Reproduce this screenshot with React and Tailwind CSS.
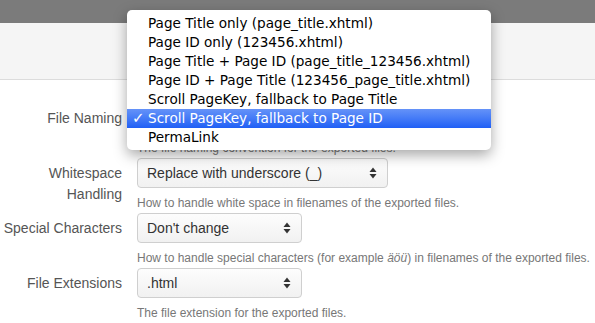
import React from 'react';

const menuItems = [
  'Page Title only (page_title.xhtml)',
  'Page ID only (123456.xhtml)',
  'Page Title + Page ID (page_title_123456.xhtml)',
  'Page ID + Page Title (123456_page_title.xhtml)',
  'Scroll PageKey, fallback to Page Title',
  'Scroll PageKey, fallback to Page ID',
  'PermaLink',
];

const selectedIndex = 5;

function Arrows() {
  return (
    <svg width="8" height="12" viewBox="0 0 8 12" className="shrink-0">
      <path d="M4 0.5 L7.5 5 L0.5 5 Z" fill="#333" />
      <path d="M4 11.5 L7.5 7 L0.5 7 Z" fill="#333" />
    </svg>
  );
}

function FakeSelect({ value, width }) {
  return (
    <div
      className={`flex h-[30px] items-center justify-between rounded-[4px] border border-[#cfcfcf] bg-gradient-to-b from-[#fdfdfd] to-[#f1f1f1] pl-[9px] pr-[10px] text-[14px] text-[#333] ${width}`}
    >
      <span>{value}</span>
      <Arrows />
    </div>
  );
}

function FormRow({ label, value, width, help }) {
  return (
    <div className="flex h-[55px]">
      <div className="w-[122px] shrink-0 pt-[5px] text-right text-[14px] leading-[21px] text-[#555]">{label}</div>
      <div className="ml-[15px] flex flex-col">
        <FakeSelect value={value} width={width} />
        <div className="mt-[7px] text-[12px] leading-[17px] text-[#777] whitespace-nowrap">{help}</div>
      </div>
    </div>
  );
}

export default function App() {
  return (
    <div className="relative h-[323px] w-[595px] overflow-hidden bg-white font-['Liberation_Sans',Arial,sans-serif]">
      <div className="h-[23px] bg-[#7b7b7b]" />
      <div className="h-[57px] border-b border-[#dcdcdc] bg-[#f5f5f5]" />

      <div className="pt-[23px]">
        <FormRow
          label="File Naming"
          value="Scroll PageKey, fallback to Page ID"
          width="w-[300px]"
          help="The file naming convention for the exported files."
        />
        <FormRow
          label={
            <>
              Whitespace
              <br />
              Handling
            </>
          }
          value="Replace with underscore (_)"
          width="w-[251px]"
          help="How to handle white space in filenames of the exported files."
        />
        <FormRow
          label="Special Characters"
          value="Don't change"
          width="w-[165px]"
          help={
            <>
              How to handle special characters (for example <i>äöü</i>) in filenames of the exported files.
            </>
          }
        />
        <FormRow
          label="File Extensions"
          value=".html"
          width="w-[165px]"
          help="The file extension for the exported files."
        />
      </div>

      <div className="absolute left-[127px] top-[10px] w-[364px] rounded-[5px] bg-white pt-[4px] pb-[3px] shadow-[0_5px_14px_rgba(0,0,0,0.35)] font-['DejaVu_Sans',sans-serif] text-[13.6px]">
        {menuItems.map((item, i) => (
          <div
            key={item}
            className={
              i === selectedIndex
                ? 'relative flex h-[19px] items-center bg-gradient-to-b from-[#6592f8] to-[#1f5ff5] pl-[21px] text-white'
                : 'flex h-[19px] items-center pl-[21px] text-black'
            }
          >
            {i === selectedIndex ? <span className="absolute left-[5px] text-[15px] font-bold">✓</span> : null}
            {item}
          </div>
        ))}
      </div>
    </div>
  );
}
